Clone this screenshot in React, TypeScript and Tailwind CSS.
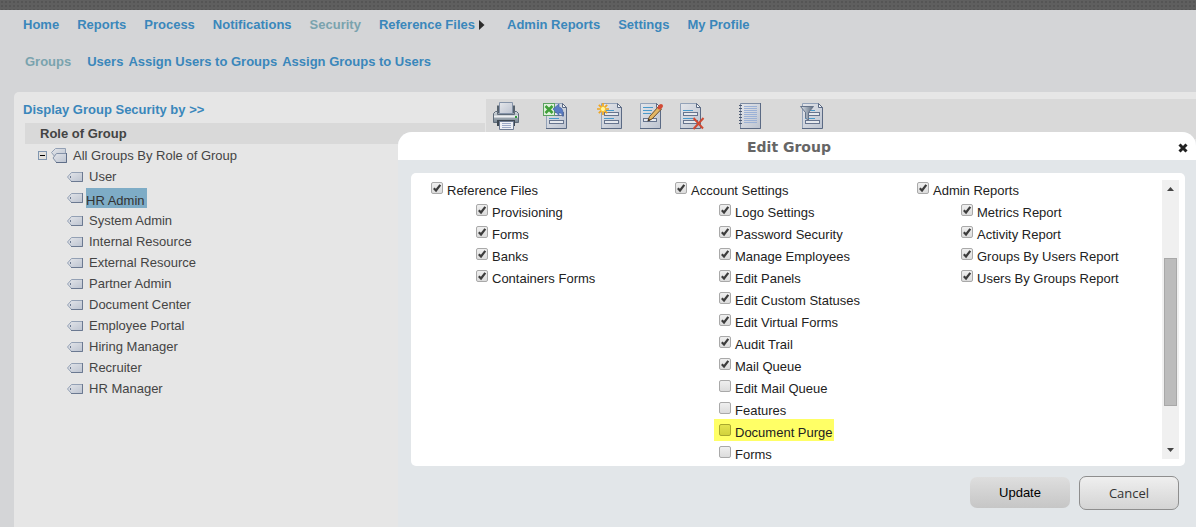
import { useId, useState } from "react";
import type { ReactNode } from "react";

const navBefore = ["Home", "Reports", "Process", "Notifications", "Security"];
const navAfter = ["Admin Reports", "Settings", "My Profile"];
const groups = [
  "User",
  "HR Admin",
  "System Admin",
  "Internal Resource",
  "External Resource",
  "Partner Admin",
  "Document Center",
  "Employee Portal",
  "Hiring Manager",
  "Recruiter",
  "HR Manager",
];

type Item = { label: string; on: boolean; marked?: boolean };
type Section = { title: string; width: string; indent: string; items: Item[] };

const on = (label: string): Item => ({ label, on: true });
const off = (label: string): Item => ({ label, on: false });

const sections: Section[] = [
  {
    title: "Reference Files",
    width: "w-[244px]",
    indent: "pl-[45px]",
    items: ["Provisioning", "Forms", "Banks", "Containers Forms"].map(on),
  },
  {
    title: "Account Settings",
    width: "w-[242px]",
    indent: "pl-[44px]",
    items: [
      ...[
        "Logo Settings",
        "Password Security",
        "Manage Employees",
        "Edit Panels",
        "Edit Custom Statuses",
        "Edit Virtual Forms",
        "Audit Trail",
        "Mail Queue",
      ].map(on),
      off("Edit Mail Queue"),
      off("Features"),
      { label: "Document Purge", on: false, marked: true },
      off("Forms"),
    ],
  },
  {
    title: "Admin Reports",
    width: "flex-1",
    indent: "pl-[44px]",
    items: ["Metrics Report", "Activity Report", "Groups By Users Report", "Users By Groups Report"].map(on),
  },
];

function Gradients() {
  return (
    <svg width="0" height="0" className="absolute" aria-hidden="true">
      <defs>
        <linearGradient id="paper" x1="0" y1="0" x2="1" y2="1">
          <stop offset="0" stopColor="#e4e6ea" />
          <stop offset="1" stopColor="#bcc3d0" />
        </linearGradient>
        <linearGradient id="metal" x1="0" y1="0" x2="0" y2="1">
          <stop offset="0" stopColor="#d5dade" />
          <stop offset="1" stopColor="#74828f" />
        </linearGradient>
        <linearGradient id="funnel" x1="0" y1="0" x2="1" y2="0">
          <stop offset="0" stopColor="#dde3ea" />
          <stop offset="1" stopColor="#5b6a7d" />
        </linearGradient>
      </defs>
    </svg>
  );
}

/* A sheet with a folded corner, drawn from x=5 to x=26 */
function Sheet({ lines = true }: { lines?: boolean }) {
  return (
    <>
      <path d="M5.5 1.5h16l4 4v21h-20z" fill="url(#paper)" />
      <path d="M5.5 26V1.5H21" fill="none" stroke="#93a2b8" />
      <path d="M21.500 1.500l4 4V26.500H5" fill="none" stroke="#5b6a84" />
      <path d="M21.500 1.500v4h4z" fill="#f2f4f7" stroke="#5b6a84" />
      {lines && (
        <>
          <path d="M8 8.500h10M8 16.500h10" stroke="#4a9acb" />
          <rect x="8.500" y="10.500" width="14" height="3" fill="#e6e9ee" stroke="#66748e" />
          <rect x="8.500" y="18.500" width="14" height="3" fill="#e6e9ee" stroke="#66748e" />
        </>
      )}
    </>
  );
}

function Icon({ children }: { children: ReactNode }) {
  return (
    <svg width="28" height="28" viewBox="0 0 28 28" className="overflow-visible" aria-hidden="true">
      {children}
    </svg>
  );
}

const PrinterIcon = () => (
  <Icon>
    <path d="M5 3.500h18v8H5z" fill="#56616c" />
    <path d="M7.500.5h13v11h-13z" fill="url(#paper)" stroke="#8593a8" />
    <path d="M3.500 9.500h2v3h17v-3h2l2 2v9h-25v-9z" fill="url(#metal)" stroke="#5e6b79" />
    <path d="M2 14.500h24" stroke="#eef0f2" strokeWidth="2" />
    <path d="M5 18h18v6H5z" fill="#3d4751" />
    <path d="M7.500 19.500h14v8h-14z" fill="#eef0f5" stroke="#6d7b92" />
    <path d="M10 21.500h9M10 23.500h9M10 25.500h9" stroke="#9aa8c6" />
    <rect x="23" y="14" width="2" height="2" fill="#2f9e38" />
  </Icon>
);

const ExcelIcon = () => (
  <Icon>
    <Sheet />
    <rect x="2.500" y="1.500" width="11" height="12" fill="#dff0dc" stroke="#5da262" />
    <path d="M4.500 4l7 7M11.500 4l-7 7" stroke="#3f9f38" strokeWidth="2.600" />
    <path d="M12 7l6-5v3q5 1 4 9.500q-1.500-4-4-4v3z" fill="#5a7bc4" stroke="#4565a8" strokeWidth=".7" />
  </Icon>
);

const NewIcon = () => (
  <Icon>
    <Sheet />
    <path d="M7 1v12M1 7h12M2.800 2.800l8.400 8.400M11.200 2.800l-8.400 8.400" stroke="#efa51f" strokeWidth="1.700" />
    <circle cx="7" cy="7" r="2.600" fill="#fff6a0" stroke="#f3bd35" />
  </Icon>
);

const EditIcon = () => (
  <Icon>
    <Sheet lines={false} />
    <path d="M8 5.500h10M8 8.500h9M8 11.500h8" stroke="#4a9acb" />
    <rect x="8.500" y="16.500" width="13" height="3" fill="#e6e9ee" stroke="#66748e" />
    <path d="M13 18.500l1.500-4L23.500 4.500l3 2.500-9.500 10z" fill="#e3b765" stroke="#6b4d2a" />
    <path d="M24.500 5.500l1.500-1.500" stroke="#d24a35" strokeWidth="4" strokeLinecap="round" />
    <path d="M12.500 19.500l1-3 2 2z" fill="#40342a" />
  </Icon>
);

const DeleteIcon = () => (
  <Icon>
    <Sheet />
    <path d="M18.500 16l9.500 10.500M28.500 16L18.500 27" stroke="#cf4a33" strokeWidth="2" />
  </Icon>
);

const NotebookIcon = () => (
  <Icon>
    <path d="M5.500 1.500h20v25h-20z" fill="url(#paper)" stroke="#7e8da5" />
    <path d="M25.500 1v25.500H5" fill="none" stroke="#5b6a84" />
    <path
      d="M9 4.500h13M9 6.500h13M9 8.500h13M9 10.500h13M9 12.500h13M9 14.500h13M9 16.500h13M9 18.500h13M9 20.500h13"
      stroke="#9bb1d6"
    />
    <path
      d="M4 3.500h3M4 6.500h3M4 9.500h3M4 12.500h3M4 15.500h3M4 18.500h3M4 21.500h3"
      stroke="#4b5870"
    />
  </Icon>
);

const FilterIcon = () => (
  <Icon>
    <Sheet />
    <path d="M3.500 4.500h13l-5 6v8l-3-2.500v-5.500z" fill="url(#funnel)" stroke="#66748a" />
  </Icon>
);

const tools = [
  { name: "Print", icon: <PrinterIcon />, gap: "" },
  { name: "Export to Excel", icon: <ExcelIcon />, gap: "ml-[21px]" },
  { name: "New group", icon: <NewIcon />, gap: "ml-[27px]" },
  { name: "Edit group", icon: <EditIcon />, gap: "ml-[11px]" },
  { name: "Delete group", icon: <DeleteIcon />, gap: "ml-[12px]" },
  { name: "Notes", icon: <NotebookIcon />, gap: "ml-[32px]" },
  { name: "Filter", icon: <FilterIcon />, gap: "ml-[34px]" },
];

function Tag() {
  return (
    <svg width="16" height="10" viewBox="0 0 16 10" className="shrink-0" aria-hidden="true">
      <path d="M4.500.5h11v9h-11L.5 5z" fill="url(#paper)" stroke="#93a0b4" />
      <path d="M15.500 0v9.500H4" fill="none" stroke="#6b7991" />
      <rect x="3" y="4" width="1" height="2" fill="#6b7991" />
    </svg>
  );
}

function TagStack() {
  return (
    <svg width="16" height="15" viewBox="0 0 16 15" className="shrink-0" aria-hidden="true">
      <path d="M4.500.5h10v9h-10L.5 4.500z" fill="url(#paper)" stroke="#93a0b4" />
      <path d="M5.500 5.500h10v9h-10l-3.500-4.500z" fill="url(#paper)" stroke="#8492a8" />
      <path d="M15.500 5v9.500H5" fill="none" stroke="#5f6e88" />
    </svg>
  );
}

function Check({ item }: { item: Item }) {
  const id = useId();
  const [checked, setChecked] = useState(item.on);
  const box = item.marked
    ? "border-[#a8a82e] from-[#e3e34f] to-[#d2d23c]"
    : "border-[#a9a9a9] from-[#efefef] to-[#dcdcdc]";
  return (
    <div className="relative isolate flex h-[22px] w-fit items-start">
      {item.marked && <span className="absolute -left-[5px] -right-px -top-[3px] -z-10 h-[22px] bg-[#ffff66]" />}
      <span className="relative mr-1 mt-[2px] flex">
        <input
          id={id}
          type="checkbox"
          checked={checked}
          onChange={() => setChecked(!checked)}
          className={`size-3 appearance-none rounded-[2px] border bg-linear-to-b ${box}`}
        />
        {checked && (
          <svg
            width="12"
            height="12"
            viewBox="0 0 12 12"
            className="pointer-events-none absolute left-0 top-0"
            aria-hidden="true"
          >
            <path d="M2.800 6.300l2.200 2.200L9.300 2.800" fill="none" stroke="#3c3c3c" strokeWidth="2.200" />
          </svg>
        )}
      </span>
      <label htmlFor={id} className="whitespace-nowrap pt-px leading-5">
        {item.label}
      </label>
    </div>
  );
}

export default function App() {
  return (
    <div className="relative flex min-h-screen flex-col overflow-hidden bg-[#d4d5d7] font-['Liberation_Sans',Arial,sans-serif] text-[13px] leading-[21px] text-[#444]">
      <Gradients />
      <div className="h-[10px] bg-[#5f5f5f] bg-[radial-gradient(#555555_1px,transparent_1px)] bg-size-[4px_4px]" />

      <nav className="flex gap-[18px] whitespace-nowrap pl-[23px] pt-1 font-bold text-[#3a87bb]">
        {navBefore.map((n) => (
          <a key={n} href="#" className={n === "Security" ? "text-[#7aa3ae]" : ""}>
            {n}
          </a>
        ))}
        <a href="#" className="mr-1 flex items-center gap-1">
          Reference Files
          <svg width="6" height="10" viewBox="0 0 6 10" aria-hidden="true">
            <path d="M0 0l5.500 5L0 10z" fill="#2b2b2b" />
          </svg>
        </a>
        {navAfter.map((n) => (
          <a key={n} href="#">
            {n}
          </a>
        ))}
      </nav>

      <nav className="flex gap-[5px] whitespace-nowrap pl-[25px] pt-4 font-bold text-[#3a87bb]">
        <a href="#" className="mr-[11px] text-[#7aa3ae]">
          Groups
        </a>
        <a href="#">Users</a>
        <a href="#">Assign Users to Groups</a>
        <a href="#">Assign Groups to Users</a>
      </nav>

      <main className="ml-[14px] mt-5 flex flex-1 rounded-tl-[5px] bg-[#e6e6e6]">
        <section className="w-[472px] pt-[7px]">
          <a href="#" className="ml-[9px] block font-bold text-[#3a87bb]">
            Display Group Security by &gt;&gt;
          </a>
          <h2 className="mb-px ml-[11px] mr-px mt-[3px] bg-[#d9d9d9] pl-[15px] pt-px font-bold leading-5">
            Role of Group
          </h2>
          <div className="ml-[24px] flex items-center">
            <button
              aria-label="Collapse"
              className="flex size-[9px] items-center justify-center border border-[#8096b0] bg-[#e2e0dc]"
            >
              <span className="h-px w-[5px] bg-black" />
            </button>
            <span className="ml-1 mr-[6px]">
              <TagStack />
            </span>
            All Groups By Role of Group
          </div>
          <ul className="pl-[53px]">
            {groups.map((g) => (
              <li key={g} className={`flex items-center ${g === "HR Admin" ? "pb-[2px] pt-px" : ""}`}>
                <Tag />
                {g === "HR Admin" ? (
                  <a href="#" className="ml-[3px] h-5 bg-[#7eacc6] pr-[2px] pt-[2px] text-[#333]">
                    {g}
                  </a>
                ) : (
                  <a href="#" className="ml-[6px]">
                    {g}
                  </a>
                )}
              </li>
            ))}
          </ul>
        </section>
        <div className="mt-[7px] flex h-10 flex-1 items-start bg-[#d9d9d9] pl-[6px] pt-[3px]">
          {tools.map((t) => (
            <button key={t.name} aria-label={t.name} className={t.gap}>
              {t.icon}
            </button>
          ))}
        </div>
      </main>

      <div
        role="dialog"
        aria-label="Edit Group"
        className="absolute bottom-0 left-[398px] right-0 top-[132px] flex flex-col rounded-t-[14px] bg-[#e2e6e9] text-[#222]"
      >
        <header className="relative flex h-7 shrink-0 items-center justify-center rounded-t-[14px] bg-white pr-4 pt-px">
          <h1 className="font-['DejaVu_Sans',Verdana,sans-serif] text-sm font-bold text-[#666]">Edit Group</h1>
          <button aria-label="Close" className="absolute right-2 top-[11px]">
            <svg width="10" height="10" viewBox="0 0 10 10" aria-hidden="true">
              <path d="M1.500 1.500l7 7M8.500 1.500l-7 7" stroke="#222" strokeWidth="3" />
            </svg>
          </button>
        </header>

        <div className="ml-[13px] mr-[11px] mt-[13px] flex h-[293px] shrink-0 rounded-[5px] bg-white py-[7px] pr-[6px]">
          <div className="flex flex-1 pl-[20px]">
            {sections.map((s) => (
              <section key={s.title} className={`${s.width} shrink-0`}>
                <Check item={on(s.title)} />
                <div className={s.indent}>
                  {s.items.map((i) => (
                    <Check key={i.label} item={i} />
                  ))}
                </div>
              </section>
            ))}
          </div>
          <div className="flex w-[17px] flex-col items-center bg-[#f0f0f0] py-[7px]">
            <svg width="7" height="4" viewBox="0 0 7 4" aria-hidden="true">
              <path d="M0 4L3.500 0 7 4z" fill="#444" />
            </svg>
            <div className="mt-[67px] h-[148px] w-[13px] border border-[#a8a8a8] bg-[#bcbcbc]" />
            <svg width="7" height="4" viewBox="0 0 7 4" className="mt-auto" aria-hidden="true">
              <path d="M0 0l3.500 4L7 0z" fill="#444" />
            </svg>
          </div>
        </div>

        <footer className="flex items-center justify-end gap-[9px] pr-[17px] pt-[10px]">
          <button className="mb-[2px] h-[31px] w-[100px] rounded-[7px] bg-linear-to-b from-[#dedede] to-[#c6c6c6] pt-px text-black">
            Update
          </button>
          <button className="h-[34px] w-[100px] rounded-[7px] border border-[#8e8e8e] bg-linear-to-b from-[#efefef] to-[#d4d4d4] font-['Open_Sans',sans-serif] text-[#333]">
            Cancel
          </button>
        </footer>
      </div>
    </div>
  );
}
